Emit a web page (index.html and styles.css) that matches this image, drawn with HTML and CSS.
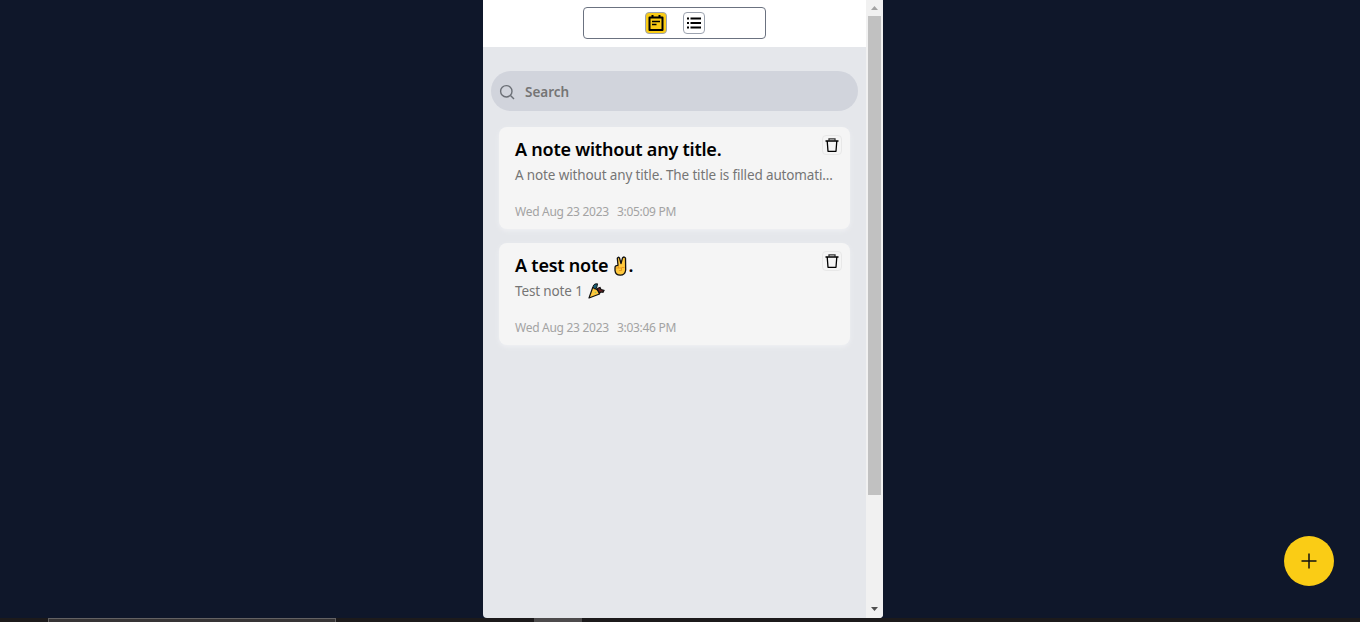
FILE: index.html
```html
<!DOCTYPE html>
<html lang="en">
<head>
<meta charset="utf-8">
<title>Notes</title>
<link rel="stylesheet" href="styles.css">
</head>
<body>
<svg class="defs" aria-hidden="true">
  <symbol id="trash" viewBox="0 0 16 16"><path d="M5 3.500V1.900h6v1.600" fill="none" stroke="#333" stroke-width="1.300"/><path d="M1.500 4h13M3.200 4l.8 10.300h8L12.800 4" fill="none" stroke="currentColor" stroke-width="1.300" stroke-linejoin="round"/></symbol>
</svg>
<div class="screen">
  <div class="phone">
    <div class="app">
      <header class="topbar">
        <nav class="switcher">
          <button class="tab tab-active" aria-label="Notes"><svg width="18" height="18" viewBox="0 0 18 18"><path d="M2.500 3.500h13v12.500h-13zM5.500 1v3M12.500 1v3" fill="none" stroke="#000" stroke-width="2" stroke-linejoin="round"/><path d="M5 7.500h8M5 10.500h4.500" fill="none" stroke="#000" stroke-width="1.500"/></svg></button>
          <button class="tab" aria-label="List"><svg width="16" height="16" viewBox="0 0 16 16"><path d="M4.500 3.500H15M4.500 8H15M4.500 12.500H15M1 3.500h2M1 8h2M1 12.500h2" fill="none" stroke="#000" stroke-width="1.900"/></svg></button>
        </nav>
      </header>
      <main class="content">
        <label class="search">
          <svg width="16" height="16" viewBox="0 0 16 16"><circle cx="7.300" cy="7.300" r="5.700"/><path d="M11.500 11.500l3.500 3.500"/></svg>
          <span class="search-text">Search</span>
        </label>
        <section class="notes">
          <article class="note">
            <div class="note-body">
              <h2 class="title">A note without any title.</h2>
              <p class="excerpt">A note without any title. The title is filled automati...</p>
              <p class="stamp"><span class="date">Wed Aug 23 2023</span><span class="time">3:05:09 PM</span></p>
            </div>
            <button class="delete" aria-label="Delete"><svg width="16" height="16"><use href="#trash"/></svg></button>
          </article>
          <article class="note">
            <div class="note-body">
              <h2 class="title"><span>A test note</span><svg class="victory" width="15" height="20" viewBox="0 0 15 20"><path d="M2 12Q1.800 9.500 5 9.300L4.300 2.300Q5 .4 6.500 2L8 7.500 9.600 1.700Q11.500.2 12.500 2L12.700 14Q12 19.200 7.300 19.200 2.400 19.200 2 14.500z" fill="#ffc83d" stroke="#111" stroke-width="1.300" stroke-linejoin="round"/><path d="M3 12h5.500v2.500H6M5.500 9.800V12M8.500 11.500h3" fill="none" stroke="#e08f1a" stroke-width=".8"/></svg><span>.</span></h2>
              <p class="excerpt"><span>Test note 1</span><svg class="party" width="17" height="16" viewBox="0 0 17 16"><path d="M1 15L4.800 4.300Q10.300 6.500 11.500 11z" fill="#ffc83d" stroke="#111" stroke-width="1.200" stroke-linejoin="round"/><path d="M6.500 6Q3.500 3 7 1L9.500.8 9 3.500 7.500 6z" fill="#165f75" stroke="#111"/><path d="M9 5.500l3-1 1 2 3 .8-1 2-2-.5-1.500 1.500z" fill="#6b2020" stroke="#111" stroke-width="1.200"/><circle cx="7.500" cy="9.500" r=".8" fill="#8fc95a"/></svg></p>
              <p class="stamp"><span class="date">Wed Aug 23 2023</span><span class="time">3:03:46 PM</span></p>
            </div>
            <button class="delete" aria-label="Delete"><svg width="16" height="16"><use href="#trash"/></svg></button>
          </article>
        </section>
      </main>
    </div>
    <div class="scrollbar">
      <svg width="17" height="16" viewBox="0 0 17 16"><path d="M5 10l3.500-4 3.500 4z" fill="#a3a3a3"/></svg>
      <div class="track"><div class="thumb"></div></div>
      <svg width="17" height="17" viewBox="0 0 17 17"><path d="M5 6h7l-3.500 4z" fill="#505050"/></svg>
    </div>
  </div>
  <button class="add" aria-label="Add note"><svg width="16" height="16" viewBox="0 0 16 16"><path d="M8 .5v15M.5 8h15" stroke="#111" stroke-width="1.500"/></svg></button>
</div>
<footer class="taskbar"><div class="task-search"></div><div class="task-active"></div></footer>
</body>
</html>
```

FILE: styles.css
```css
* { box-sizing: border-box; }
body { margin: 0; height: 622px; overflow: hidden; background: #0f172a; font-family: "Noto Sans", "Open Sans", sans-serif; }
button { padding: 0; font: inherit; background: none; }
svg { display: block; flex: none; }
h2, p { margin: 0; white-space: nowrap; }
.defs { position: absolute; width: 0; height: 0; }
.screen { height: 618px; display: flex; justify-content: center; padding-left: 6px; }
.phone { width: 400px; height: 618px; display: flex; overflow: hidden; border-radius: 0 0 4px 4px; background: #e5e7eb; }
.app { width: 383px; }
.topbar { height: 47px; background: #fff; display: flex; justify-content: center; padding-top: 7px; }
.switcher { width: 183px; height: 32px; border: 1px solid #6b7280; border-radius: 4px; display: flex; align-items: center; justify-content: center; gap: 16px; }
.tab { width: 22px; height: 22px; border: 1px solid #9ca3af; border-radius: 4px; display: flex; align-items: center; justify-content: center; }
.tab-active { background: #facc15; }
.content { padding: 24px 8px 0; }
.search { height: 40px; border-radius: 20px; background: #d1d4dc; display: flex; align-items: center; gap: 10px; padding: 1px 0 0 8px; }
.search svg { fill: none; stroke: #6b6f76; stroke-width: 1.4; }
.search-text { font-size: 13.5px; font-weight: 600; color: #757575; }
.notes { padding: 16px 8px 0; display: flex; flex-direction: column; gap: 14px; }
.note { height: 102px; border-radius: 8px; background: #f5f5f5; box-shadow: 0 2px 4px #eff0f3; display: flex; justify-content: space-between; padding: 8px 8px 0 16px; }
.note-body { width: 0; }
.title { height: 29px; line-height: 29px; font-size: 18px; font-weight: 600; letter-spacing: -0.23px; color: #000; display: flex; }
.excerpt { height: 22px; line-height: 22px; font-size: 13.5px; letter-spacing: -0.14px; color: #757575; display: flex; }
.stamp { margin-top: 17px; height: 18px; line-height: 18px; font-size: 12px; letter-spacing: -0.28px; color: #a3a3a3; display: flex; gap: 8px; }
.victory { margin: 5px 0 0 5px; }
.party { margin: 3px 0 0 5px; }
.delete { width: 20px; height: 20px; border: 1px solid #e8e8e8; border-radius: 4px; display: flex; align-items: center; justify-content: center; color: #000; }
.scrollbar { width: 17px; background: #f1f1f1; display: flex; flex-direction: column; }
.track { flex: 1; padding: 0 2px; }
.thumb { height: 479px; background: #c1c1c1; }
.add { position: absolute; left: 1284px; top: 536px; width: 50px; height: 50px; border: 0; border-radius: 50%; background: #facc15; display: flex; align-items: center; justify-content: center; }
.taskbar { height: 4px; background: #1c1a1b; display: flex; padding-left: 48px; gap: 198px; }
.task-search { width: 288px; background: #363435; border: 1px solid #646263; border-bottom: 0; }
.task-active { width: 48px; background: #4d4b4c; }
```
